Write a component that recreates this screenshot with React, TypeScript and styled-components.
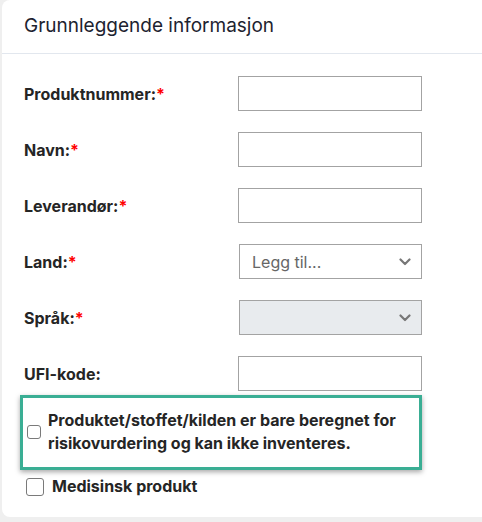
import React from "react";
import styled, { createGlobalStyle } from "styled-components";

const Global = createGlobalStyle`
  html, body { margin: 0; padding: 0; background: #efefef; }
  body { font-family: Inter, "Noto Sans", Arial, sans-serif; }
  * { box-sizing: border-box; }
`;

const Card = styled.div`
  margin-left: 2px;
  width: 492px;
  height: 517px;
  background: #fff;
  border-radius: 8px 0 8px 8px;
  overflow: hidden;
`;

const Header = styled.div`
  height: 54px;
  border-bottom: 1px solid #e2e7ee;
  display: flex;
  align-items: center;
  padding-left: 22px;
  padding-bottom: 2px;
  font-size: 19px;
  color: #1d2330;
`;

const Body = styled.div`
  padding: 22px 0 0 22px;
  display: flex;
  flex-direction: column;
`;

const Rows = styled.div`
  display: flex;
  flex-direction: column;
  gap: 21px;
`;

const Row = styled.div`
  display: grid;
  grid-template-columns: 214px 184px;
  align-items: center;
  height: 35px;
`;

const Label = styled.label`
  font-size: 16px;
  font-weight: 700;
  color: #252525;
  padding-top: 1px;
`;

const Req = styled.span`
  color: #f00;
`;

const TextInput = styled.div`
  height: 35px;
  border: 1px solid #a3a3a3;
  background: #fff;
`;

const Select = styled.div<{ $disabled?: boolean }>`
  height: 35px;
  width: 183px;
  margin-left: 1px;
  border: 1px solid #a3a3a3;
  background: ${(p) => (p.$disabled ? "#e8ebee" : "#fff")};
  display: flex;
  align-items: center;
  justify-content: space-between;
  padding: 0 10px 0 12px;
  font-size: 16px;
  color: #666;
`;

const Highlight = styled.div`
  margin: 4px 0 0 -4px;
  width: 402px;
  height: 75px;
  border: 3px solid #3aae94;
  box-shadow: 0 2px 5px rgba(0, 0, 0, 0.35);
  display: flex;
  align-items: center;
  gap: 7px;
  padding: 0 0 1px 4px;
`;

const SmallBox = styled.span`
  flex: none;
  width: 14px;
  height: 14px;
  border: 1px solid #7a7a7a;
  border-radius: 3px;
  background: #fff;
`;

const BigBox = styled.span`
  flex: none;
  width: 18px;
  height: 18px;
  border: 1px solid #7a7a7a;
  border-radius: 3px;
  background: #fff;
`;

const CheckText = styled.span`
  font-size: 16px;
  font-weight: 700;
  line-height: 23px;
  color: #252525;
`;

const CheckRow = styled.div`
  display: flex;
  align-items: center;
  gap: 8px;
  margin: 5px 0 0 2px;
`;

const Chevron = () => (
  <svg width="12" height="8" viewBox="0 0 12 8">
    <path d="M1.5 1.5 L6 6 L10.5 1.5" fill="none" stroke="#777" strokeWidth="2.2" strokeLinecap="round" strokeLinejoin="round" />
  </svg>
);

const fields: { label: string; req: boolean; kind: "text" | "select" | "disabled" }[] = [
  { label: "Produktnummer:", req: true, kind: "text" },
  { label: "Navn:", req: true, kind: "text" },
  { label: "Leverandør:", req: true, kind: "text" },
  { label: "Land:", req: true, kind: "select" },
  { label: "Språk:", req: true, kind: "disabled" },
  { label: "UFI-kode:", req: false, kind: "text" },
];

export default function App() {
  return (
    <>
      <Global />
      <Card>
        <Header>Grunnleggende informasjon</Header>
        <Body>
          <Rows>
            {fields.map((f) => (
              <Row key={f.label}>
                <Label>
                  {f.label}
                  {f.req && <Req>*</Req>}
                </Label>
                {f.kind === "text" && <TextInput />}
                {f.kind === "select" && (
                  <Select>
                    <span>Legg til...</span>
                    <Chevron />
                  </Select>
                )}
                {f.kind === "disabled" && (
                  <Select $disabled>
                    <span />
                    <Chevron />
                  </Select>
                )}
              </Row>
            ))}
          </Rows>
          <Highlight>
            <SmallBox />
            <CheckText>
              Produktet/stoffet/kilden er bare beregnet for
              <br />
              risikovurdering og kan ikke inventeres.
            </CheckText>
          </Highlight>
          <CheckRow>
            <BigBox />
            <CheckText>Medisinsk produkt</CheckText>
          </CheckRow>
        </Body>
      </Card>
    </>
  );
}
